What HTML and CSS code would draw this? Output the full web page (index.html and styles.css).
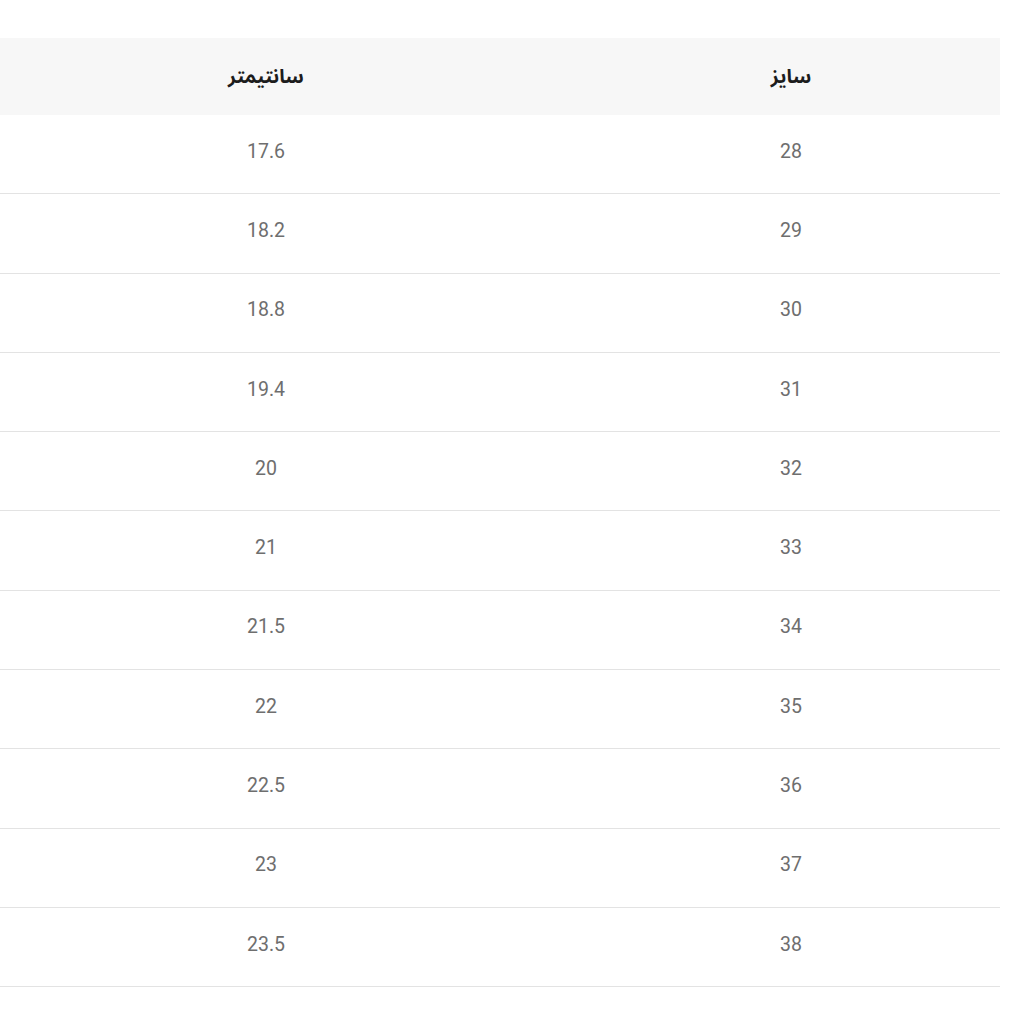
FILE: index.html
```html
<!DOCTYPE html>
<html lang="fa" dir="rtl">
<head>
<meta charset="utf-8">
<title>جدول سایز</title>
<link rel="stylesheet" href="styles.css">
</head>
<body>
<div class="size-table">
  <div class="row head">
    <div class="cell c-size">سایز</div>
    <div class="cell c-cm">سانتیمتر</div>
  </div>
  <div class="row"><div class="cell c-size">28</div><div class="cell c-cm">17.6</div></div>
  <div class="row"><div class="cell c-size">29</div><div class="cell c-cm">18.2</div></div>
  <div class="row"><div class="cell c-size">30</div><div class="cell c-cm">18.8</div></div>
  <div class="row"><div class="cell c-size">31</div><div class="cell c-cm">19.4</div></div>
  <div class="row"><div class="cell c-size">32</div><div class="cell c-cm">20</div></div>
  <div class="row"><div class="cell c-size">33</div><div class="cell c-cm">21</div></div>
  <div class="row"><div class="cell c-size">34</div><div class="cell c-cm">21.5</div></div>
  <div class="row"><div class="cell c-size">35</div><div class="cell c-cm">22</div></div>
  <div class="row"><div class="cell c-size">36</div><div class="cell c-cm">22.5</div></div>
  <div class="row"><div class="cell c-size">37</div><div class="cell c-cm">23</div></div>
  <div class="row"><div class="cell c-size">38</div><div class="cell c-cm">23.5</div></div>
</div>
</body>
</html>
```
FILE: styles.css
```css
html, body {
  margin: 0;
  padding: 0;
  background: #ffffff;
}
body {
  font-family: Roboto, "Noto Sans", "DejaVu Sans", sans-serif;
}
.size-table {
  width: 1000px;
  margin-top: 38px;
  margin-left: 0;
  margin-right: auto;
}
.row {
  display: grid;
  grid-template-columns: 418px 582px;
  box-sizing: border-box;
  height: 79.3px;
  border-bottom: 1px solid #e3e3e3;
}
.row.head {
  height: 77px;
  background: #f7f7f7;
  border-bottom: none;
}
.cell {
  display: flex;
  align-items: center;
  justify-content: center;
  box-sizing: border-box;
  padding-bottom: 6px;
  font-size: 19.5px;
  color: #6e6e6e;
}
.c-cm {
  padding-right: 50px;
}
.head .cell {
  padding-bottom: 0;
  font-family: "Noto Sans Arabic", "DejaVu Sans", sans-serif;
  font-weight: bold;
  font-size: 19.5px;
  color: #1c1c1c;
}
```
